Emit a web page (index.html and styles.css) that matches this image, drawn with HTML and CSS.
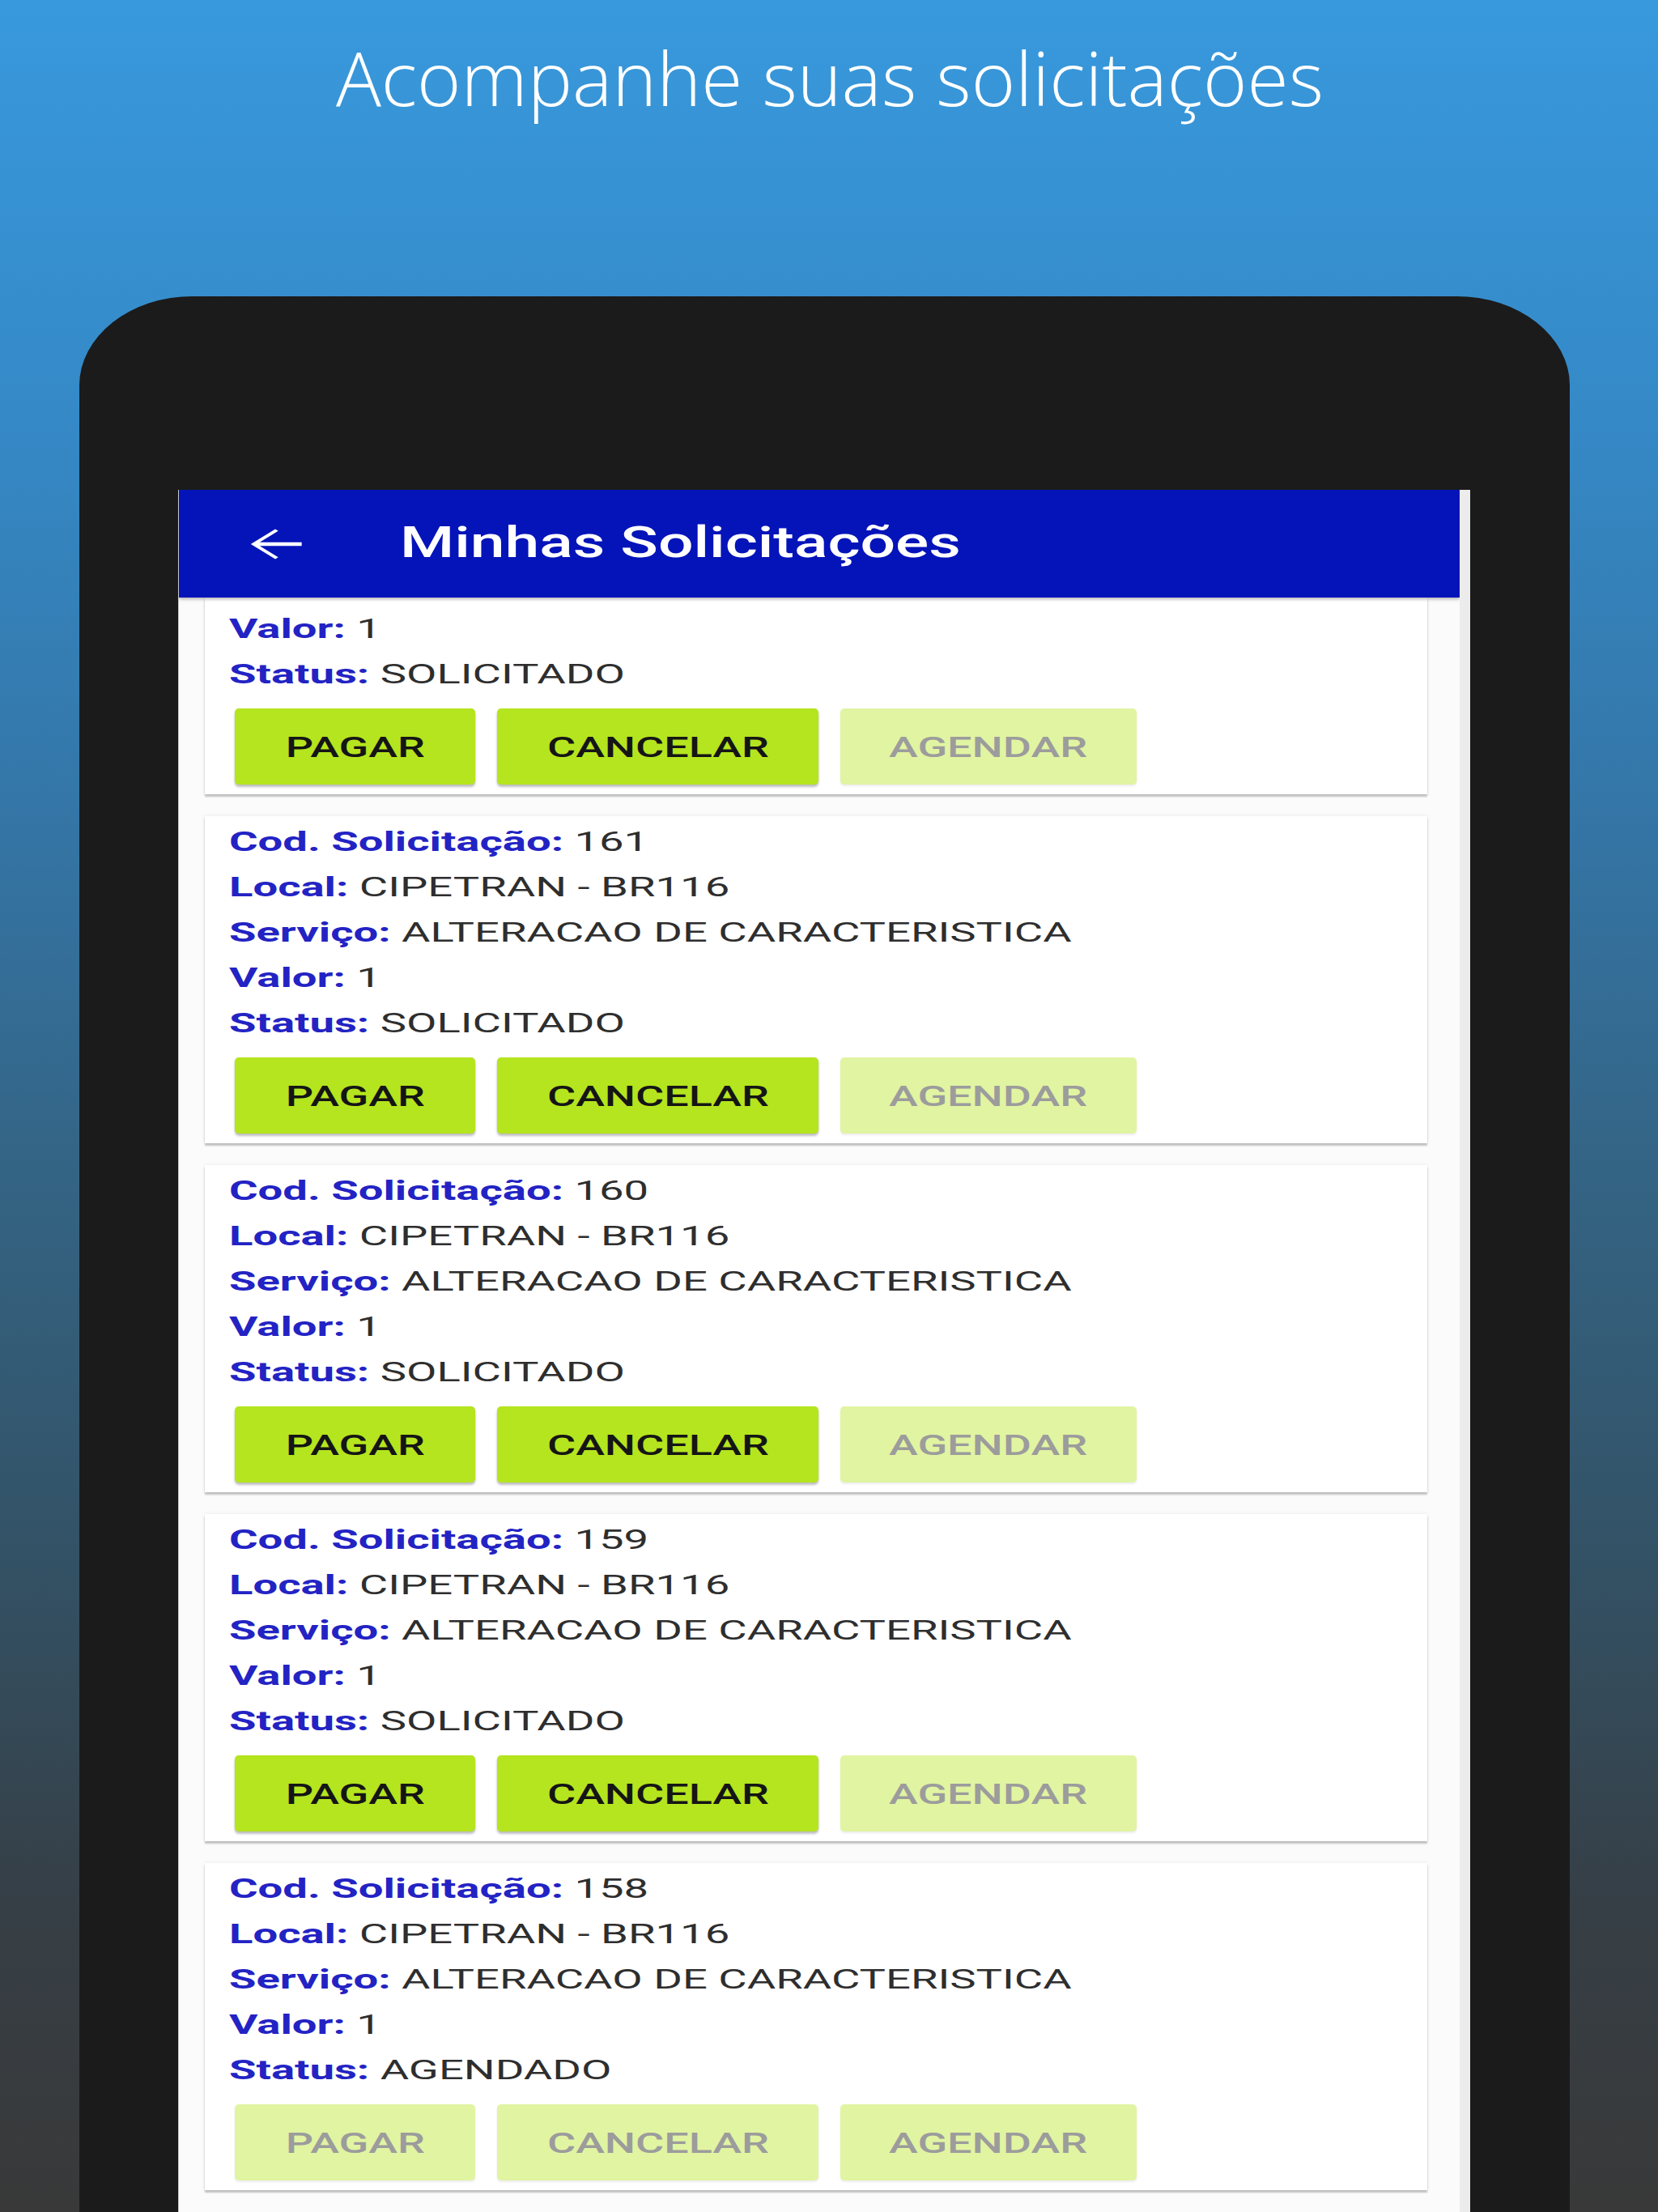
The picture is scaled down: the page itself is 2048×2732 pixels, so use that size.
FILE: index.html
```html
<!DOCTYPE html>
<html lang="pt-BR">
<head>
<meta charset="utf-8">
<title>Acompanhe suas solicitações</title>
<link rel="stylesheet" href="styles.css">
</head>
<body>
<div class="page">
  <header class="hero">
    <h1 class="hero-title">Acompanhe suas solicitações</h1>
  </header>
  <div class="device">
    <div class="screen">
      <div class="appbar">
        <svg class="back" viewBox="0 0 24 24" preserveAspectRatio="none" aria-hidden="true">
          <path d="M20 11.1H7.3l5.6-5.6L12 4.6 4.6 12l7.4 7.4.9-.9-5.6-5.6H20z" fill="#fff"/>
        </svg>
        <span class="appbar-title">Minhas Solicitações</span>
      </div>
      <div class="list">
        <div class="cards">
          <div class="card partial">
            <div class="row"><b>Valor:</b> 1</div>
            <div class="row"><b>Status:</b> SOLICITADO</div>
            <div class="actions">
              <div class="btn w-pagar"><span>PAGAR</span></div>
              <div class="btn w-cancelar"><span>CANCELAR</span></div>
              <div class="btn w-agendar off"><span>AGENDAR</span></div>
            </div>
          </div>
          <div class="card">
            <div class="row"><b>Cod. Solicitação:</b> 161</div>
            <div class="row"><b>Local:</b> CIPETRAN - BR116</div>
            <div class="row"><b>Serviço:</b> ALTERACAO DE CARACTERISTICA</div>
            <div class="row"><b>Valor:</b> 1</div>
            <div class="row"><b>Status:</b> SOLICITADO</div>
            <div class="actions">
              <div class="btn w-pagar"><span>PAGAR</span></div>
              <div class="btn w-cancelar"><span>CANCELAR</span></div>
              <div class="btn w-agendar off"><span>AGENDAR</span></div>
            </div>
          </div>
          <div class="card">
            <div class="row"><b>Cod. Solicitação:</b> 160</div>
            <div class="row"><b>Local:</b> CIPETRAN - BR116</div>
            <div class="row"><b>Serviço:</b> ALTERACAO DE CARACTERISTICA</div>
            <div class="row"><b>Valor:</b> 1</div>
            <div class="row"><b>Status:</b> SOLICITADO</div>
            <div class="actions">
              <div class="btn w-pagar"><span>PAGAR</span></div>
              <div class="btn w-cancelar"><span>CANCELAR</span></div>
              <div class="btn w-agendar off"><span>AGENDAR</span></div>
            </div>
          </div>
          <div class="card">
            <div class="row"><b>Cod. Solicitação:</b> 159</div>
            <div class="row"><b>Local:</b> CIPETRAN - BR116</div>
            <div class="row"><b>Serviço:</b> ALTERACAO DE CARACTERISTICA</div>
            <div class="row"><b>Valor:</b> 1</div>
            <div class="row"><b>Status:</b> SOLICITADO</div>
            <div class="actions">
              <div class="btn w-pagar"><span>PAGAR</span></div>
              <div class="btn w-cancelar"><span>CANCELAR</span></div>
              <div class="btn w-agendar off"><span>AGENDAR</span></div>
            </div>
          </div>
          <div class="card">
            <div class="row"><b>Cod. Solicitação:</b> 158</div>
            <div class="row"><b>Local:</b> CIPETRAN - BR116</div>
            <div class="row"><b>Serviço:</b> ALTERACAO DE CARACTERISTICA</div>
            <div class="row"><b>Valor:</b> 1</div>
            <div class="row"><b>Status:</b> AGENDADO</div>
            <div class="actions">
              <div class="btn w-pagar off"><span>PAGAR</span></div>
              <div class="btn w-cancelar off"><span>CANCELAR</span></div>
              <div class="btn w-agendar off"><span>AGENDAR</span></div>
            </div>
          </div>
        </div>
      </div>
    </div>
  </div>
</div>
</body>
</html>
```
FILE: styles.css
```css
html, body {
  margin: 0;
  padding: 0;
}
body {
  width: 2048px;
  height: 2732px;
  overflow: hidden;
}
.page {
  width: 2048px;
  height: 2732px;
  overflow: hidden;
  display: flex;
  flex-direction: column;
  background: linear-gradient(180deg, #3899dd 0%, #3588c5 20%, #3474a4 38%, #346586 52%, #335266 70%, #363f46 86%, #393939 100%);
}
.hero {
  height: 366px;
  flex: none;
  box-sizing: border-box;
  padding-top: 31px;
}
.hero-title {
  margin: 0;
  text-align: center;
  font-family: "Open Sans", sans-serif;
  font-weight: 300;
  font-size: 93px;
  line-height: 128px;
  color: #ffffff;
  padding-left: 2px;
}
.device {
  flex: 1;
  margin-left: 98px;
  width: 1841px;
  box-sizing: border-box;
  background: #1b1b1b;
  border-radius: 140px 140px 0 0 / 110px 110px 0 0;
  padding: 239px 123px 0 122px;
  display: flex;
}
.screen {
  flex: 1;
  background: #fbfbfb;
  border-left: 1px solid #c8c8c8;
  border-right: 13px solid #ececec;
  display: flex;
  flex-direction: column;
  overflow: hidden;
}
.appbar {
  position: relative;
  z-index: 2;
  flex: none;
  height: 133px;
  background: #0514b9;
  display: flex;
  align-items: center;
  box-shadow: 0 2px 4px rgba(0, 0, 0, 0.3);
}
.back {
  width: 98px;
  height: 60px;
  margin-left: 70px;
  flex: none;
}
.appbar-title {
  margin-left: 105px;
  font-family: Roboto, "Noto Sans", sans-serif;
  font-weight: 500;
  font-size: 53px;
  color: #ffffff;
  transform: scaleX(1.45);
  transform-origin: left center;
  white-space: nowrap;
  margin-bottom: 4px;
}
.list {
  flex: 1;
  overflow: hidden;
  position: relative;
  z-index: 1;
}
.cards {
  display: flex;
  flex-direction: column;
  gap: 27px;
}
.card {
  margin-left: 32px;
  width: 1510px;
  height: 404px;
  flex: none;
  box-sizing: border-box;
  padding: 3px 30px 0 30px;
  background: #ffffff;
  box-shadow: 0 3px 2px rgba(0, 0, 0, 0.22), 0 0 5px rgba(0, 0, 0, 0.08);
  font-family: Roboto, "Noto Sans", sans-serif;
}
.card.partial {
  height: 243px;
  padding-top: 10px;
}
.row {
  font-size: 34px;
  line-height: 56px;
  height: 56px;
  color: #2e2e2e;
  white-space: nowrap;
  transform: scaleX(1.6);
  transform-origin: left center;
}
.row b {
  font-weight: 700;
  color: #2323c4;
}
.actions {
  margin-top: 15px;
  padding-left: 7px;
  display: flex;
  gap: 27px;
}
.btn {
  height: 94px;
  box-sizing: border-box;
  border-radius: 5px;
  background: #b5e51e;
  box-shadow: 0 3px 3px rgba(0, 0, 0, 0.25), 0 0 2px rgba(0, 0, 0, 0.08);
  display: flex;
  align-items: center;
  justify-content: center;
  color: #151515;
  font-family: Roboto, "Noto Sans", sans-serif;
  font-weight: 500;
  font-size: 35px;
}
.btn span {
  transform: scaleX(1.54);
  transform-origin: center;
  white-space: nowrap;
  margin-top: 2px;
}
.btn.off {
  background: #e1f4a2;
  color: #9c9c9c;
  box-shadow: 0 2px 3px rgba(0, 0, 0, 0.08);
}
.w-pagar {
  width: 297px;
}
.w-cancelar {
  width: 397px;
}
.w-agendar {
  width: 366px;
}
```
